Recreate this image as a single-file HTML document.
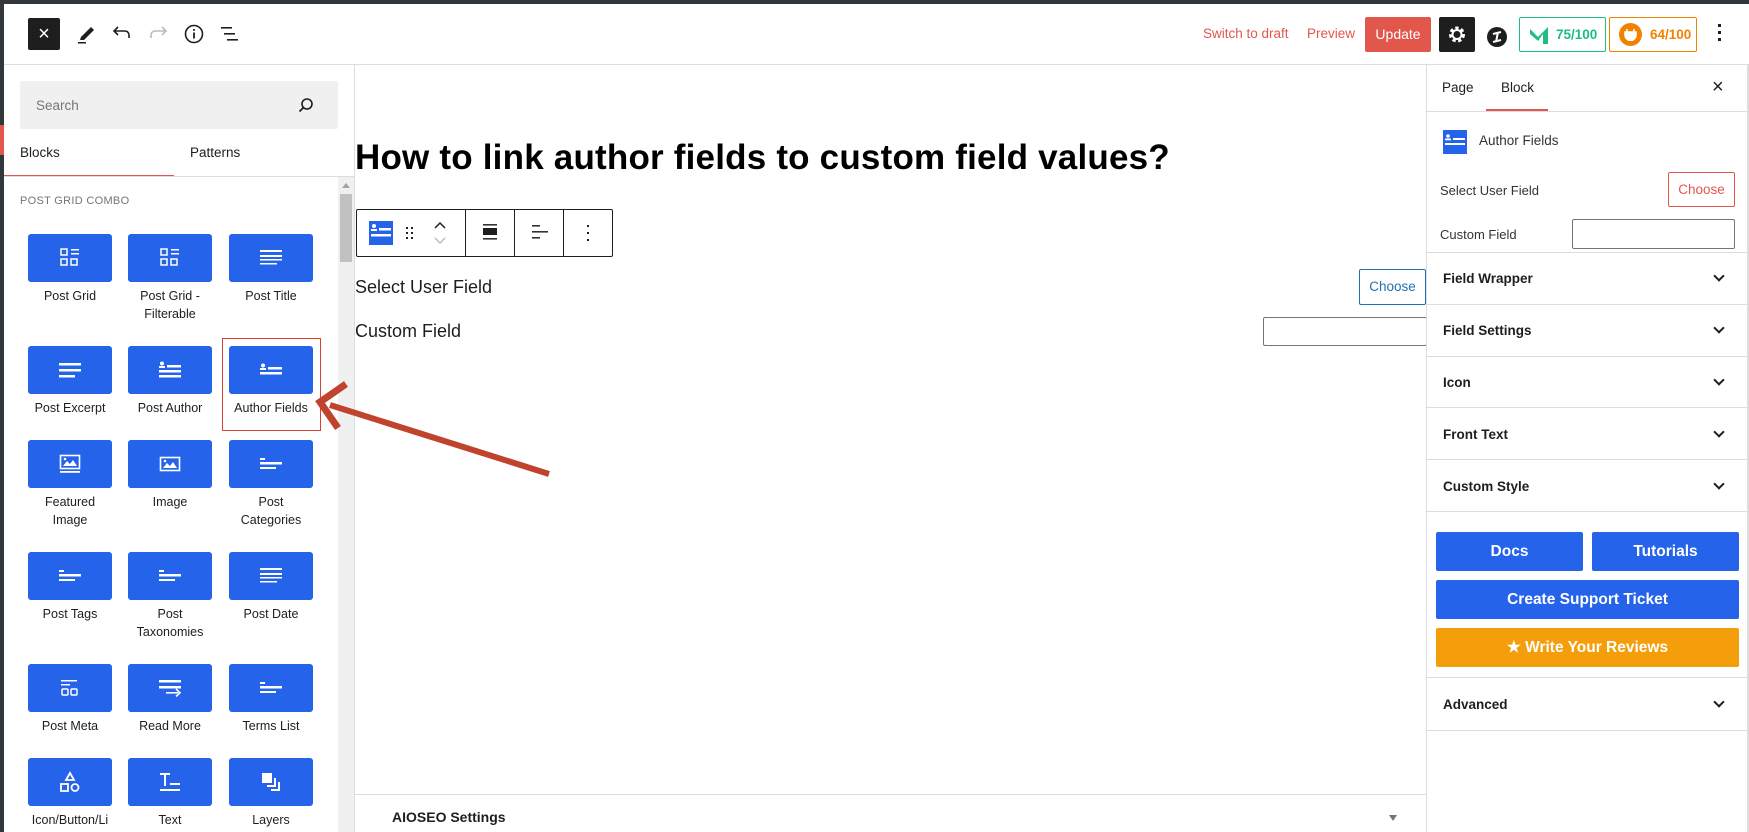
<!DOCTYPE html>
<html><head><meta charset="utf-8"><style>
*{box-sizing:border-box;margin:0;padding:0}
body{width:1749px;height:832px;position:relative;overflow:hidden;background:#fff;font-family:"Liberation Sans",sans-serif;color:#1e1e1e}
.a{position:absolute}
.tile{position:absolute;width:84px;height:48px;background:#2563eb;border-radius:3px;display:flex;align-items:center;justify-content:center}
.lbl{position:absolute;width:110px;text-align:center;font-size:12.5px;line-height:18px;color:#1e1e1e}
.sec{position:absolute;left:1427px;width:322px;border-top:1px solid #ddd;font-size:13.5px;font-weight:bold;color:#1e1e1e}
.sec span{position:absolute;left:16px}
.chev{position:absolute;right:26px;width:8px;height:8px;border-right:2px solid #1e1e1e;border-bottom:2px solid #1e1e1e;transform:rotate(45deg)}
.btn{position:absolute;background:#2563eb;color:#fff;font-weight:bold;font-size:15.5px;text-align:center;border-radius:2px;display:flex;align-items:center;justify-content:center}
</style></head><body>
<div class="a" style="left:0;top:0;width:1749px;height:4px;background:#32373c"></div>
<div class="a" style="left:0;top:0;width:4px;height:832px;background:#32373c"></div>
<div class="a" style="left:4px;top:64px;width:1745px;height:1px;background:#ddd"></div>
<!-- header left -->
<div class="a" style="left:28px;top:18px;width:32px;height:32px;background:#1e1e1e;border-radius:2px;color:#fff;font-size:20px;text-align:center;line-height:32px">×</div>
<svg class="a" style="left:76px;top:22px" width="22" height="22" viewBox="0 0 22 22"><path d="M5 15 L15 5 L18 8 L8 18 L4 18Z" fill="#1e1e1e"/><rect x="2" y="20" width="8" height="1.5" fill="#1e1e1e"/></svg>
<svg class="a" style="left:112px;top:24px" width="20" height="18" viewBox="0 0 20 18"><path d="M6 3 L2 7 L6 11 M2 7 H13 A4 4 0 0 1 17 11 V14" fill="none" stroke="#1e1e1e" stroke-width="1.6"/></svg>
<svg class="a" style="left:148px;top:24px" width="20" height="18" viewBox="0 0 20 18"><path d="M14 3 L18 7 L14 11 M18 7 H7 A4 4 0 0 0 3 11 V14" fill="none" stroke="#bbb" stroke-width="1.6"/></svg>
<svg class="a" style="left:184px;top:24px" width="20" height="20" viewBox="0 0 20 20"><circle cx="10" cy="10" r="8.5" fill="none" stroke="#1e1e1e" stroke-width="1.6"/><rect x="9.1" y="8.5" width="1.8" height="6" fill="#1e1e1e"/><rect x="9.1" y="5" width="1.8" height="1.8" fill="#1e1e1e"/></svg>
<svg class="a" style="left:220px;top:26px" width="20" height="16" viewBox="0 0 20 16"><rect x="1" y="1" width="11" height="1.6" fill="#1e1e1e"/><rect x="4" y="7" width="11" height="1.6" fill="#1e1e1e"/><rect x="7" y="13" width="11" height="1.6" fill="#1e1e1e"/></svg>
<!-- header right -->
<div class="a" style="left:1203px;top:26px;font-size:13.5px;color:#e2574c">Switch to draft</div>
<div class="a" style="left:1307px;top:26px;font-size:13.5px;color:#e2574c">Preview</div>
<div class="a" style="left:1365px;top:17px;width:66px;height:35px;background:#e2574c;color:#fff;font-size:14px;line-height:35px;text-align:center;border-radius:2px">Update</div>
<div class="a" style="left:1439px;top:17px;width:36px;height:35px;background:#1e1e1e;border-radius:2px"><svg width="36" height="35" viewBox="0 0 36 35"><circle cx="18" cy="17.5" r="6" fill="none" stroke="#fff" stroke-width="4" stroke-dasharray="3 2.3"/><circle cx="18" cy="17.5" r="4.5" fill="none" stroke="#fff" stroke-width="2"/></svg></div>
<div class="a" style="left:1487px;top:27px;width:20px;height:20px;border-radius:50%;background:#1e1e1e"><svg width="20" height="20"><path d="M6 7 L14 5 M6 15 L14 13 M11 5 L9 15" stroke="#fff" stroke-width="2"/></svg></div>
<div class="a" style="left:1519px;top:17px;width:87px;height:35px;border:1px solid #1ebd82;border-radius:2px;color:#1ebd82;font-weight:bold;font-size:13.5px;line-height:33px;padding-left:36px">75/100<svg class="a" style="left:9px;top:7px" width="20" height="20"><path d="M1 4 L9 12 L19 2 V19 H14 V9 L9 16 L1 9Z" fill="#1ebd82"/></svg></div>
<div class="a" style="left:1609px;top:17px;width:88px;height:35px;border:1px solid #f18200;border-radius:2px;color:#f18200;font-weight:bold;font-size:13.5px;line-height:33px;padding-left:40px">64/100<div class="a" style="left:9px;top:5px;width:23px;height:23px;border-radius:50%;background:#f18200"></div><svg class="a" style="left:14px;top:10px" width="13" height="13"><path d="M3 1 V4 M10 1 V4 M1 4 H12 V7 A5.5 5.5 0 0 1 1 7Z M6.5 11 V13" fill="#fff" stroke="#fff" stroke-width="1.5"/></svg></div>
<div class="a" style="left:1718px;top:24px;width:3px;height:3px;background:#1e1e1e;box-shadow:0 7px #1e1e1e,0 14px #1e1e1e"></div>
<!-- left sidebar -->
<div class="a" style="left:354px;top:65px;width:1px;height:767px;background:#ddd"></div>
<div class="a" style="left:20px;top:81px;width:318px;height:48px;background:#f0f0f0;border-radius:2px;font-size:13.5px;color:#757575;padding:25px 0 0 16px;line-height:0">Search</div>
<svg class="a" style="left:298px;top:97px" width="16" height="16"><circle cx="9" cy="7" r="5" fill="none" stroke="#1e1e1e" stroke-width="1.6"/><path d="M5.5 10.5 L1.5 14.5" stroke="#1e1e1e" stroke-width="1.8"/></svg>
<div class="a" style="left:20px;top:145px;font-size:13.5px">Blocks</div>
<div class="a" style="left:190px;top:145px;font-size:13.5px">Patterns</div>
<div class="a" style="left:4px;top:175px;width:170px;height:2px;background:#e2574c"></div>
<div class="a" style="left:0;top:125px;width:4px;height:30px;background:#e2574c"></div>
<div class="a" style="left:4px;top:176px;width:350px;height:1px;background:#ddd"></div>
<div class="a" style="left:20px;top:195px;font-size:11px;color:#757575;letter-spacing:.3px">POST GRID COMBO</div>
<div class="a" style="left:338px;top:177px;width:16px;height:655px;background:#f0f0f0"></div>
<div class="a" style="left:340px;top:194px;width:12px;height:68px;background:#c1c1c1"></div>
<div class="a" style="left:342px;top:183px;border:4px solid transparent;border-bottom:5px solid #a3a3a3;border-top:0"></div>

<div class="tile" style="left:28px;top:234px"><svg width="22" height="22"><g fill="none" stroke="#fff" stroke-width="1.5"><rect x="2" y="2" width="6" height="6"/><rect x="2" y="12" width="6" height="6"/><rect x="12" y="12" width="6" height="6"/></g><rect x="12" y="2" width="8" height="1.5" fill="#fff"/><rect x="12" y="6" width="8" height="1.5" fill="#fff"/></svg></div>
<div class="tile" style="left:128px;top:234px"><svg width="22" height="22"><g fill="none" stroke="#fff" stroke-width="1.5"><rect x="2" y="2" width="6" height="6"/><rect x="2" y="12" width="6" height="6"/><rect x="12" y="12" width="6" height="6"/></g><rect x="12" y="2" width="8" height="1.5" fill="#fff"/><rect x="12" y="6" width="8" height="1.5" fill="#fff"/></svg></div>
<div class="tile" style="left:229px;top:234px"><svg width="24" height="18"><g fill="#fff"><rect x="1" y="1" width="22" height="2"/><rect x="1" y="6" width="22" height="2"/><rect x="1" y="10" width="22" height="1.5"/><rect x="1" y="14" width="17" height="1.5"/></g></svg></div>
<div class="lbl" style="left:15px;top:287px">Post Grid</div>
<div class="lbl" style="left:115px;top:287px">Post Grid -<br>Filterable</div>
<div class="lbl" style="left:216px;top:287px">Post Title</div>
<div class="tile" style="left:28px;top:346px"><svg width="24" height="16"><g fill="#fff"><rect x="1" y="1" width="22" height="2.5"/><rect x="1" y="7" width="22" height="2.5"/><rect x="1" y="13" width="16" height="2.5"/></g></svg></div>
<div class="tile" style="left:128px;top:346px"><svg width="24" height="18"><g fill="#fff"><circle cx="4" cy="2.5" r="2"/><rect x="1" y="5" width="6" height="2"/><rect x="9" y="4" width="14" height="2.5"/><rect x="1" y="9" width="22" height="2.5"/><rect x="1" y="14" width="22" height="2.5"/></g></svg></div>
<div class="tile" style="left:229px;top:346px"><svg width="24" height="14"><g fill="#fff"><circle cx="4" cy="2.5" r="2"/><rect x="1" y="5" width="6" height="2"/><rect x="9" y="4" width="14" height="2.5"/><rect x="1" y="9" width="22" height="2.5"/></g></svg></div>
<div class="lbl" style="left:15px;top:399px">Post Excerpt</div>
<div class="lbl" style="left:115px;top:399px">Post Author</div>
<div class="lbl" style="left:216px;top:399px">Author Fields</div>
<div class="a" style="left:222px;top:338px;width:99px;height:93px;border:1.5px solid #dc3f33"></div>
<div class="tile" style="left:28px;top:440px"><svg width="22" height="20"><rect x="1.5" y="1.5" width="19" height="13" fill="none" stroke="#fff" stroke-width="1.6"/><path d="M4 12 L8 7 L11 10 L14 6 L18 12Z" fill="#fff"/><circle cx="6" cy="5" r="1.3" fill="#fff"/><rect x="1" y="17" width="20" height="1.8" fill="#fff"/></svg></div>
<div class="tile" style="left:128px;top:440px"><svg width="22" height="16"><rect x="1.5" y="1.5" width="19" height="13" fill="none" stroke="#fff" stroke-width="1.6"/><path d="M4 12 L8 7 L11 10 L14 6 L18 12Z" fill="#fff"/><circle cx="6" cy="5" r="1.3" fill="#fff"/></svg></div>
<div class="tile" style="left:229px;top:440px"><svg width="24" height="14"><g fill="#fff"><rect x="1" y="1" width="5" height="2"/><rect x="1" y="5" width="22" height="2.5"/><rect x="1" y="10" width="16" height="2"/></g></svg></div>
<div class="lbl" style="left:15px;top:493px">Featured<br>Image</div>
<div class="lbl" style="left:115px;top:493px">Image</div>
<div class="lbl" style="left:216px;top:493px">Post<br>Categories</div>
<div class="tile" style="left:28px;top:552px"><svg width="24" height="14"><g fill="#fff"><rect x="1" y="1" width="5" height="2"/><rect x="1" y="5" width="22" height="2.5"/><rect x="1" y="10" width="16" height="2"/></g></svg></div>
<div class="tile" style="left:128px;top:552px"><svg width="24" height="14"><g fill="#fff"><rect x="1" y="1" width="5" height="2"/><rect x="1" y="5" width="22" height="2.5"/><rect x="1" y="10" width="16" height="2"/></g></svg></div>
<div class="tile" style="left:229px;top:552px"><svg width="24" height="18"><g fill="#fff"><rect x="1" y="1" width="22" height="2"/><rect x="1" y="6" width="22" height="2"/><rect x="1" y="10" width="22" height="1.5"/><rect x="1" y="14" width="17" height="1.5"/></g></svg></div>
<div class="lbl" style="left:15px;top:605px">Post Tags</div>
<div class="lbl" style="left:115px;top:605px">Post<br>Taxonomies</div>
<div class="lbl" style="left:216px;top:605px">Post Date</div>
<div class="tile" style="left:28px;top:664px"><svg width="20" height="18"><g fill="#fff"><rect x="1" y="1" width="16" height="1.5"/><rect x="1" y="5" width="9" height="1.5"/></g><g fill="none" stroke="#fff" stroke-width="1.5"><rect x="2" y="10" width="6" height="6" rx="1"/><rect x="11" y="10" width="6" height="6" rx="1"/></g></svg></div>
<div class="tile" style="left:128px;top:664px"><svg width="24" height="18"><g fill="#fff"><rect x="1" y="1" width="22" height="2.5"/><rect x="1" y="7" width="22" height="2.5"/><rect x="8" y="13" width="12" height="1.6"/></g><path d="M18 10 L22 13.8 L18 17.5" fill="none" stroke="#fff" stroke-width="1.6"/></svg></div>
<div class="tile" style="left:229px;top:664px"><svg width="24" height="14"><g fill="#fff"><rect x="1" y="1" width="5" height="2"/><rect x="1" y="5" width="22" height="2.5"/><rect x="1" y="10" width="16" height="2"/></g></svg></div>
<div class="lbl" style="left:15px;top:717px">Post Meta</div>
<div class="lbl" style="left:115px;top:717px">Read More</div>
<div class="lbl" style="left:216px;top:717px">Terms List</div>
<div class="tile" style="left:28px;top:758px"><svg width="22" height="22"><g fill="none" stroke="#fff" stroke-width="1.8"><path d="M11 2 L15 9 H7Z"/><rect x="2" y="13" width="7" height="7"/><circle cx="16" cy="16.5" r="3.5"/></g></svg></div>
<div class="tile" style="left:128px;top:758px"><svg width="22" height="22"><g fill="#fff"><rect x="1" y="2" width="10" height="2"/><rect x="5" y="2" width="2" height="13"/><rect x="11" y="12" width="10" height="2"/><rect x="1" y="18" width="20" height="2"/></g></svg></div>
<div class="tile" style="left:229px;top:758px"><svg width="22" height="22"><rect x="2" y="2" width="10" height="10" fill="#fff"/><path d="M15 7 V15 H7 M19 11 V19 H11" fill="none" stroke="#fff" stroke-width="2"/></svg></div>
<div class="lbl" style="left:15px;top:811px">Icon/Button/Li</div>
<div class="lbl" style="left:115px;top:811px">Text</div>
<div class="lbl" style="left:216px;top:811px">Layers</div>

<!-- main -->
<div class="a" style="left:355px;top:138px;font-size:35px;font-weight:bold;color:#000;letter-spacing:.2px">How to link author fields to custom field values?</div>
<div class="a" style="left:356px;top:209px;width:257px;height:48px;border:1px solid #1e1e1e;border-radius:2px"></div>
<div class="a" style="left:465px;top:210px;width:1px;height:46px;background:#1e1e1e"></div>
<div class="a" style="left:514px;top:210px;width:1px;height:46px;background:#1e1e1e"></div>
<div class="a" style="left:563px;top:210px;width:1px;height:46px;background:#1e1e1e"></div>
<div class="a" style="left:369px;top:221px;width:24px;height:24px;background:#2563eb"><svg width="24" height="24"><g fill="#fff"><circle cx="5" cy="5" r="2"/><rect x="2" y="8" width="6" height="2"/><rect x="10" y="7" width="12" height="2.5"/><rect x="2" y="13" width="20" height="2.5"/></g></svg></div>
<svg class="a" style="left:404px;top:225px" width="12" height="16"><g fill="#1e1e1e"><rect x="2" y="2" width="2" height="2"/><rect x="7" y="2" width="2" height="2"/><rect x="2" y="7" width="2" height="2"/><rect x="7" y="7" width="2" height="2"/><rect x="2" y="12" width="2" height="2"/><rect x="7" y="12" width="2" height="2"/></g></svg>
<svg class="a" style="left:432px;top:220px" width="16" height="26"><path d="M3 8 L8 3 L13 8" fill="none" stroke="#1e1e1e" stroke-width="1.5"/><path d="M3 18 L8 23 L13 18" fill="none" stroke="#bbb" stroke-width="1.5"/></svg>
<svg class="a" style="left:482px;top:223px" width="16" height="20"><rect x="1" y="1" width="14" height="1.6" fill="#333"/><rect x="1" y="5" width="14" height="7" fill="#1e1e1e"/><rect x="1" y="15" width="14" height="1.6" fill="#333"/></svg>
<svg class="a" style="left:531px;top:223px" width="18" height="20"><rect x="1" y="2" width="8" height="1.6" fill="#333"/><rect x="1" y="8" width="16" height="1.6" fill="#333"/><rect x="1" y="14" width="8" height="1.6" fill="#333"/></svg>
<svg class="a" style="left:585px;top:223px" width="6" height="20"><g fill="#1e1e1e"><rect x="2" y="2" width="2" height="2"/><rect x="2" y="9" width="2" height="2"/><rect x="2" y="16" width="2" height="2"/></g></svg>
<div class="a" style="left:355px;top:277px;font-size:18px;color:#1e1e1e">Select User Field</div>
<div class="a" style="left:355px;top:321px;font-size:18px;color:#1e1e1e">Custom Field</div>
<div class="a" style="left:1359px;top:269px;width:67px;height:36px;border:1px solid #2271b1;border-radius:2px;color:#2271b1;font-size:13.5px;text-align:center;line-height:34px">Choose</div>
<div class="a" style="left:1263px;top:317px;width:164px;height:29px;border:1px solid #757575;border-radius:2px"></div>
<!-- arrow -->
<svg class="a" style="left:300px;top:380px" width="260" height="110"><line x1="249" y1="94" x2="30" y2="25" stroke="#c0432d" stroke-width="6"/><path d="M46 4 L20 22 L38 48" fill="none" stroke="#c0432d" stroke-width="7"/></svg>
<!-- aioseo -->
<div class="a" style="left:355px;top:794px;width:1072px;height:1px;background:#ddd"></div>
<div class="a" style="left:392px;top:809px;font-size:14px;font-weight:bold;color:#1e1e1e">AIOSEO Settings</div>
<div class="a" style="left:1389px;top:815px;border:4.5px solid transparent;border-top:6px solid #757575;border-bottom:0"></div>

<!-- right sidebar -->
<div class="a" style="left:1426px;top:65px;width:1px;height:767px;background:#ddd"></div>
<div class="a" style="left:1747px;top:65px;width:2px;height:767px;background:#ddd"></div>
<div class="a" style="left:1442px;top:80px;font-size:13.5px">Page</div>
<div class="a" style="left:1501px;top:80px;font-size:13.5px">Block</div>
<div class="a" style="left:1486px;top:109px;width:62px;height:2px;background:#e2574c"></div>
<div class="a" style="left:1427px;top:111px;width:322px;height:1px;background:#ddd"></div>
<div class="a" style="left:1712px;top:76px;font-size:20px">×</div>
<div class="a" style="left:1443px;top:130px;width:24px;height:24px;background:#2563eb"><svg width="24" height="24"><g fill="#fff"><circle cx="5" cy="6" r="1.8"/><rect x="2" y="8.5" width="6" height="1.8"/><rect x="10" y="8" width="12" height="2"/><rect x="2" y="13" width="20" height="2"/></g></svg></div>
<div class="a" style="left:1479px;top:133px;font-size:13.5px;color:#333">Author Fields</div>
<div class="a" style="left:1440px;top:183px;font-size:13px;color:#333">Select User Field</div>
<div class="a" style="left:1668px;top:172px;width:67px;height:35px;border:1px solid #e2574c;border-radius:2px;color:#e2574c;font-size:13.5px;text-align:center;line-height:33px">Choose</div>
<div class="a" style="left:1440px;top:227px;font-size:13px;color:#333">Custom Field</div>
<div class="a" style="left:1572px;top:219px;width:163px;height:30px;border:1px solid #757575;border-radius:2px"></div>
<div class="sec" style="top:252px;height:52px"><span style="top:18px">Field Wrapper</span><i class="chev" style="top:19px"></i></div>
<div class="sec" style="top:304px;height:52px"><span style="top:18px">Field Settings</span><i class="chev" style="top:19px"></i></div>
<div class="sec" style="top:356px;height:51px"><span style="top:18px">Icon</span><i class="chev" style="top:19px"></i></div>
<div class="sec" style="top:407px;height:52px"><span style="top:19px">Front Text</span><i class="chev" style="top:20px"></i></div>
<div class="sec" style="top:459px;height:52px"><span style="top:19px">Custom Style</span><i class="chev" style="top:20px"></i></div>
<div class="sec" style="top:511px;height:1px"></div>
<div class="btn" style="left:1436px;top:532px;width:147px;height:39px">Docs</div>
<div class="btn" style="left:1592px;top:532px;width:147px;height:39px">Tutorials</div>
<div class="btn" style="left:1436px;top:580px;width:303px;height:39px">Create Support Ticket</div>
<div class="btn" style="left:1436px;top:628px;width:303px;height:39px;background:#f59e0b">★ Write Your Reviews</div>
<div class="sec" style="top:677px;height:53px"><span style="top:19px">Advanced</span><i class="chev" style="top:20px"></i></div>
<div class="sec" style="top:730px;height:1px"></div>
</body></html>
